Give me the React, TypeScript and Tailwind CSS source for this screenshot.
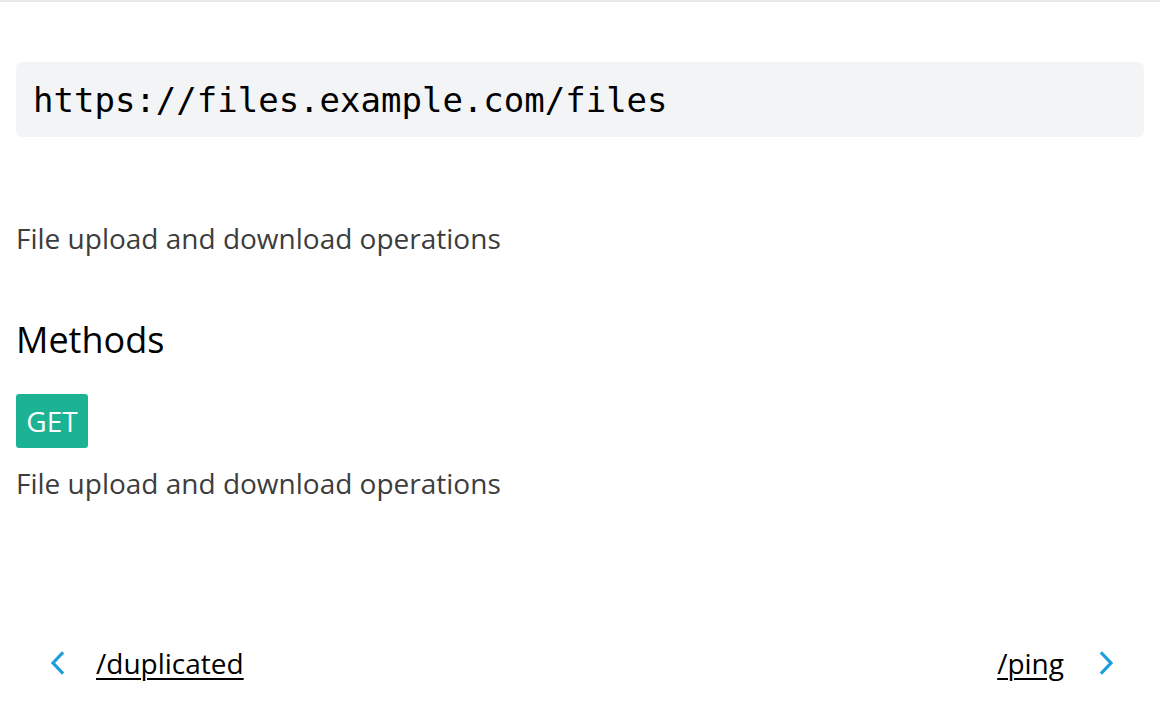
export default function App() {
  return (
    <div className="w-[1160px] h-[714px] bg-white overflow-hidden border-t-2 border-[#e8e8e8] flex flex-col" style={{ fontFamily: '"Open Sans", "Noto Sans", sans-serif' }}>
      <div className="px-4 pt-[60px]">
        <div className="bg-[#f3f4f6] rounded-md h-[75px] flex items-center px-[17px]">
          <span className="text-[34px] text-black leading-none" style={{ fontFamily: '"DejaVu Sans Mono", monospace' }}>https://files.example.com/files</span>
        </div>
        <p className="mt-[85px] text-[28px] leading-[32px] text-[#3d3d3d]">File upload and download operations</p>
        <h2 className="mt-[66px] text-[36px] leading-[40px] text-black">Methods</h2>
        <div className="mt-[34px] inline-flex items-center justify-center w-[72px] h-[54px] bg-[#1cb394] rounded-[3px] text-white text-[28px]">GET</div>
        <p className="mt-[19px] text-[28px] leading-[32px] text-[#3d3d3d]">File upload and download operations</p>
      </div>
      <div className="mt-auto mb-[30px] flex items-center justify-between pl-[46px] pr-[42px]">
        <div className="flex items-center gap-[26px]">
          <svg width="24" height="24" viewBox="0 0 24 24" fill="none" stroke="#1e9fdb" strokeWidth="3.2" strokeLinecap="square">
            <path d="M16 2.5 L7 12 L16 21.5" />
          </svg>
          <a className="text-[28px] text-black underline underline-offset-4 decoration-2">/duplicated</a>
        </div>
        <div className="flex items-center gap-[30px]">
          <a className="text-[28px] text-black underline underline-offset-4 decoration-2">/ping</a>
          <svg width="24" height="24" viewBox="0 0 24 24" fill="none" stroke="#1e9fdb" strokeWidth="3.2" strokeLinecap="square">
            <path d="M8 2.5 L17 12 L8 21.5" />
          </svg>
        </div>
      </div>
    </div>
  );
}
